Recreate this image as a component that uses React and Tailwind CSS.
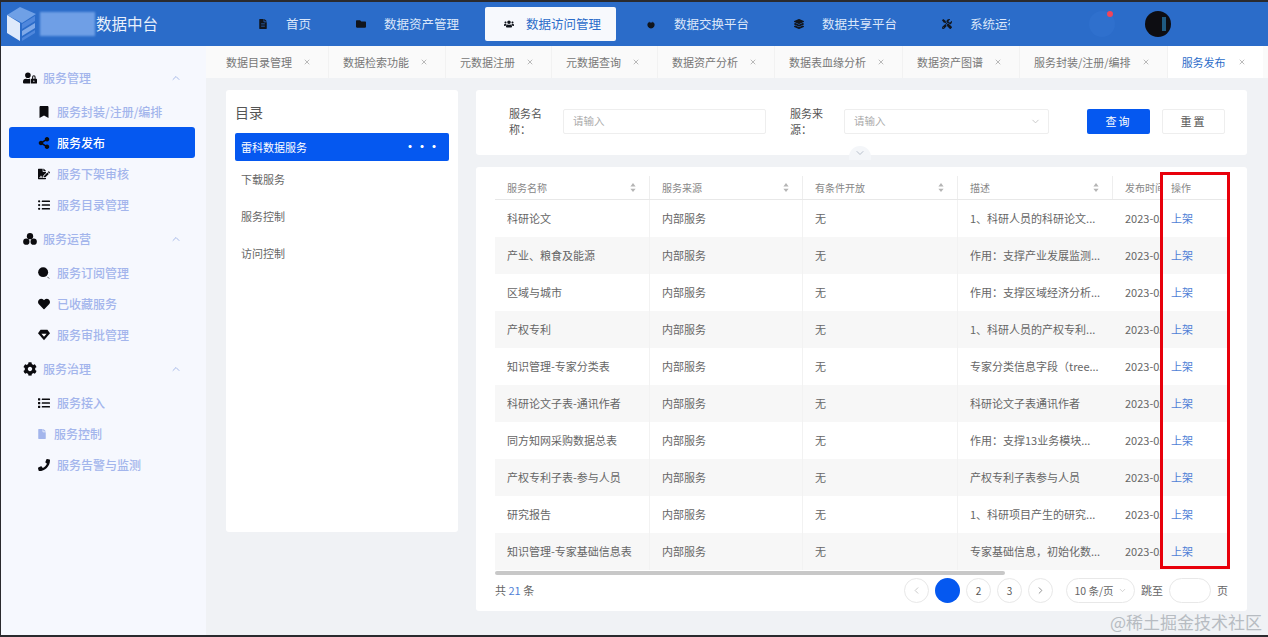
import {
  FaFileAlt, FaFolder, FaUsers, FaLayerGroup, FaTools, FaUserLock, FaBookmark, FaShareAlt,
  FaFileSignature, FaListUl, FaHeart, FaCog, FaList, FaFile, FaPhone, FaChevronUp,
} from 'react-icons/fa';
import { ChevronDown, ChevronLeft, ChevronRight, ChevronUp, X } from 'lucide-react';

const DropIcon = ({ className }) => (
  <svg viewBox="0 0 12 14" className={className} fill="currentColor">
    <path d="M6 0v5h2V3.500L10.500 6A5 5 0 1 1 1.500 6L4 3.500V5h2z" />
  </svg>
);

const CirclesIcon = ({ className }) => (
  <svg viewBox="0 0 16 14" className={className} fill="currentColor">
    <circle cx="8" cy="3.800" r="3.600" />
    <circle cx="3.800" cy="10" r="3.600" />
    <circle cx="12.200" cy="10" r="3.600" />
  </svg>
);

const OrderIcon = ({ className }) => (
  <svg viewBox="0 0 14 14" className={className} fill="currentColor">
    <circle cx="6" cy="6" r="5.800" />
    <path d="M11 11.500l2 2" stroke="currentColor" strokeWidth="0.800" />
  </svg>
);

const DiamondHeartIcon = ({ className }) => (
  <svg viewBox="0 0 14 12" className={className}>
    <path d="M3 0h8l3 4-7 8-7-8z" fill="currentColor" />
    <path d="M4 4.500h6L7 8z" fill="#fff" />
  </svg>
);

const Logo = () => (
  <svg viewBox="0 0 32 38" className="w-[32px] h-[38px]">
    <path d="M1 10 14 2l16 7-14 9z" fill="#6fa0e6" />
    <path d="M1 10l13 8v18L1 28z" fill="#dfeafb" />
    <path d="M16 19l13-8v5l-13 8z" fill="#4f87dc" />
    <path d="M16 26l13-8v5l-13 8z" fill="#7fa9e8" />
    <path d="M16 33l13-8v3l-13 8z" fill="#4f87dc" />
  </svg>
);

const navItems = [
  { label: '首页', icon: FaFileAlt },
  { label: '数据资产管理', icon: FaFolder },
  { label: '数据访问管理', icon: FaUsers, active: true },
  { label: '数据交换平台', icon: DropIcon },
  { label: '数据共享平台', icon: FaLayerGroup },
  { label: '系统运行管理', icon: FaTools },
];

const tabs = [
  '数据目录管理', '数据检索功能', '元数据注册', '元数据查询', '数据资产分析',
  '数据表血缘分析', '数据资产图谱', '服务封装/注册/编排',
];

const menu = [
  {
    title: '服务管理',
    icon: FaUserLock,
    items: [
      { label: '服务封装/注册/编排', icon: FaBookmark },
      { label: '服务发布', icon: FaShareAlt, active: true },
      { label: '服务下架审核', icon: FaFileSignature },
      { label: '服务目录管理', icon: FaListUl },
    ],
  },
  {
    title: '服务运营',
    icon: CirclesIcon,
    items: [
      { label: '服务订阅管理', icon: OrderIcon },
      { label: '已收藏服务', icon: FaHeart },
      { label: '服务审批管理', icon: DiamondHeartIcon },
    ],
  },
  {
    title: '服务治理',
    icon: FaCog,
    items: [
      { label: '服务接入', icon: FaList },
      { label: '服务控制', icon: FaFile, tinted: true },
      { label: '服务告警与监测', icon: FaPhone },
    ],
  },
];

const rows = [
  ['科研论文', '1、科研人员的科研论文...'],
  ['产业、粮食及能源', '作用：支撑产业发展监测...'],
  ['区域与城市', '作用：支撑区域经济分析...'],
  ['产权专利', '1、科研人员的产权专利...'],
  ['知识管理-专家分类表', '专家分类信息字段（tree...'],
  ['科研论文子表-通讯作者', '科研论文子表通讯作者'],
  ['同方知网采购数据总表', '作用：支撑13业务模块...'],
  ['产权专利子表-参与人员', '产权专利子表参与人员'],
  ['研究报告', '1、科研项目产生的研究...'],
  ['知识管理-专家基础信息表', '专家基础信息，初始化数...'],
];

const SortIcon = () => (
  <svg viewBox="0 0 8 12" className="w-[6px] h-[9px] text-[#b5b5b5]" fill="currentColor">
    <path d="M4 0l3.500 4.500h-7zM4 12L.5 7.500h7z" />
  </svg>
);

const HeadCell = ({ label, className, sort = true }) => (
  <div className={`flex items-center justify-between pl-3 pr-[13px] border-r border-[#eeeeee] ${className}`}>
    <span>{label}</span>
    {sort && <SortIcon />}
  </div>
);

const PageButton = ({ children, active }) => (
  <div
    className={`w-[25px] h-[25px] rounded-full flex items-center justify-center text-[10px] ${
      active ? 'bg-[#0558f0] text-white' : 'border border-[#e8e8e8] text-[#555555]'
    }`}
  >
    {children}
  </div>
);

export default function App() {
  return (
    <div className="relative h-[637px] w-[1268px] overflow-hidden flex flex-col border-t-2 border-b-2 border-l border-[#2a2a2e] bg-[#f0f2f5] text-[11px] text-[#666666] font-['Noto_Sans_CJK_SC','Liberation_Sans',sans-serif]">
      {/* top bar */}
      <header className="h-[44px] shrink-0 flex items-center bg-[#2b6cc9]">
        <div className="w-[238px] shrink-0 flex items-center pl-[5px]">
          <Logo />
          <div className="ml-[2px] w-[55px] h-[24px] bg-[#6f9fe6] blur-[1px]" />
          <span className="ml-[1px] text-[15.5px] text-[#e8f0fb]">数据中台</span>
        </div>
        <nav className="w-[771px] shrink-0 flex items-center gap-[11px] overflow-hidden">
          {navItems.map((item) => (
            <div
              key={item.label}
              className={`h-[34px] shrink-0 flex items-center pl-[19px] pr-[15px] rounded-[2px] whitespace-nowrap text-[12.500px] ${
                item.active ? 'bg-[#f7f9fd] text-[#2b6cc9] gap-[12px]' : 'text-[#dbe7fa] gap-[18px]'
              }`}
            >
              <item.icon className="w-[10px] h-[10px] text-[#11151c]" />
              {item.label}
            </div>
          ))}
        </nav>
        <div className="relative ml-[79px] w-[26px] h-[26px] rounded-full bg-[#2f70cd]">
          <span className="absolute right-[2px] top-[0px] w-[6px] h-[6px] rounded-full bg-[#f0455a]" />
        </div>
        <div className="ml-[30px] w-[26px] h-[26px] rounded-full bg-[#0d0d12] overflow-hidden flex items-center justify-end">
          <span className="w-[4px] h-[14px] mr-[5px] bg-[#1f5a80]" />
        </div>
      </header>

      <div className="flex flex-1 min-h-0">
        {/* side menu */}
        <aside className="w-[205px] shrink-0 bg-[#f6f8fe] pt-[15px] text-[12px] text-[#a3b5ec]">
          {menu.map((group) => (
            <div key={group.title} className="mb-[2px]">
              <div className="h-[34px] mb-[1px] flex items-center pl-[22px] pr-[24px]">
                <group.icon className="w-[14px] h-[14px] text-[#0b0b0f]" />
                <span className="ml-[6px] font-medium flex-1">{group.title}</span>
                <ChevronUp className="w-[12px] h-[12px] text-[#a9bbe9]" />
              </div>
              {group.items.map((item) => (
                <div
                  key={item.label}
                  className={`h-[31px] ml-[8px] mr-[11px] pl-[29px] flex items-center font-medium rounded-[3px] ${
                    item.active ? 'bg-[#0558f0] text-white font-bold' : ''
                  } ${item.tinted ? 'gap-[8px]' : 'gap-[7px]'}`}
                >
                  <item.icon className={item.tinted ? 'w-[8px] h-[10px] text-[#a3b5ec]' : 'w-[12px] h-[12px] text-[#0b0b0f]'} />
                  {item.label}
                </div>
              ))}
            </div>
          ))}
        </aside>

        <main className="flex-1 min-w-0 flex flex-col">
          {/* open tabs */}
          <div className="h-[32px] shrink-0 flex items-center bg-[#fafafa] pl-[6px] overflow-hidden whitespace-nowrap">
            {tabs.map((tab) => (
              <div key={tab} className="h-full shrink-0 flex items-center pl-[14px] pr-[17px] text-[#777777] border-r border-[#f2f2f2] last:border-r-0">
                <span>{tab}</span>
                <X className="ml-[11px] w-[8px] h-[8px] text-[#999999]" />
              </div>
            ))}
            <div className="h-full shrink-0 flex items-center pl-[14px] pr-[17px] bg-white text-[#2b6cc9]">
              <span>服务发布</span>
              <X className="ml-[12px] w-[8px] h-[8px] text-[#999999]" />
            </div>
            <span className="ml-[14px] text-[#888888]">···</span>
          </div>

          <div className="flex pt-[12px] pl-[20px] gap-[18px]">
            {/* catalog */}
            <section className="w-[232px] h-[442px] shrink-0 bg-white rounded-[3px] px-[9px] pt-[12px]">
              <h2 className="text-[14px] leading-[20px] text-[#555555]">目录</h2>
              <div className="mt-[11px] h-[28px] flex items-center justify-between pl-[6px] pr-[9px] rounded-[2px] bg-[#0558f0] text-white">
                <span>雷科数据服务</span>
                <span className="text-[12px] font-bold leading-none">···</span>
              </div>
              {['下载服务', '服务控制', '访问控制'].map((name) => (
                <div key={name} className="h-[37px] first-of-type:mt-[5px] flex items-center pl-[6px]">{name}</div>
              ))}
            </section>

            <div className="w-[771px] shrink-0 flex flex-col gap-[12px]">
              {/* filter */}
              <section className="relative h-[65px] bg-white rounded-[3px] flex items-center pl-[33px] pb-[3px] text-[#555555]">
                <span className="w-[54px] shrink-0">服务名称：</span>
                <div className="w-[203px] h-[25px] border border-[#eeeeee] rounded-[2px] flex items-center pl-[9px] text-[10.500px] text-[#aaaaaa]">请输入</div>
                <span className="ml-[24px] w-[54px] shrink-0">服务来源：</span>
                <div className="w-[205px] h-[25px] border border-[#eeeeee] rounded-[2px] flex items-center justify-between pl-[9px] pr-[7px] text-[10.500px] text-[#aaaaaa]">
                  请输入
                  <ChevronDown className="w-[11px] h-[11px] text-[#c5c5c5]" />
                </div>
                <button className="ml-[38px] w-[63px] h-[25px] rounded-[2px] bg-[#0558f0] text-white tracking-[2px]">查询</button>
                <button className="ml-[12px] w-[63px] h-[25px] rounded-[2px] border border-[#eeeeee] text-[#555555] tracking-[2px]">重置</button>
                <div className="absolute left-[373px] bottom-[-5px] w-[22px] h-[14px] rounded-t-full bg-[#f4f6f9] flex items-center justify-center">
                  <ChevronDown className="w-[12px] h-[12px] text-[#b8c0cc]" />
                </div>
              </section>

              {/* table */}
              <section className="h-[444px] bg-white rounded-[3px] pt-[9px] pl-[19px] pr-[17px]">
                <div className="h-[24px] flex items-stretch border-b border-[#e8e8e8] text-[10px] text-[#888888]">
                  <HeadCell label="服务名称" className="w-[155px]" />
                  <HeadCell label="服务来源" className="w-[153px]" />
                  <HeadCell label="有条件开放" className="w-[155px]" />
                  <HeadCell label="描述" className="w-[155px]" />
                  <div className="w-[47px] pl-3 flex items-center overflow-hidden whitespace-nowrap">发布时间</div>
                  <div className="w-[70px] pl-[11px] flex items-center">操作</div>
                </div>
                {rows.map(([name, desc], i) => (
                  <div key={name} className={`h-[37px] flex items-stretch whitespace-nowrap ${i % 2 === 1 ? 'bg-[#f7f7f7]' : 'bg-white'}`}>
                    <div className="w-[155px] pl-3 flex items-center border-r border-[#f2f2f2]">{name}</div>
                    <div className="w-[153px] pl-3 flex items-center border-r border-[#f2f2f2]">内部服务</div>
                    <div className="w-[155px] pl-3 flex items-center border-r border-[#f2f2f2]">无</div>
                    <div className="w-[155px] pl-3 flex items-center">{desc}</div>
                    <div className="w-[47px] pl-3 flex items-center overflow-hidden">2023-05-12</div>
                    <div className="w-[70px] pl-[11px] flex items-center text-[#4f7fd6]">上架</div>
                  </div>
                ))}
                <div className="mt-[1px] h-[4px] w-[510px] rounded-full bg-[#c8c8c8]" />
                <div className="mt-[3px] h-[25px] flex items-center text-[#666666]">
                  <span className="pl-[-1px]">共 <span className="text-[#4f7fd6]">21</span> 条</span>
                  <div className="ml-auto flex items-center gap-[6px]">
                    <PageButton><ChevronLeft className="w-[11px] h-[11px] text-[#c5c5c5]" /></PageButton>
                    <PageButton active> </PageButton>
                    <PageButton>2</PageButton>
                    <PageButton>3</PageButton>
                    <PageButton><ChevronRight className="w-[11px] h-[11px] text-[#888888]" /></PageButton>
                  </div>
                  <div className="ml-[13px] w-[69px] h-[25px] rounded-full border border-[#e8e8e8] flex items-center justify-center gap-[4px] text-[10.500px]">
                    10 条/页
                    <ChevronDown className="w-[9px] h-[9px] text-[#c5c5c5]" />
                  </div>
                  <span className="ml-[6px]">跳至</span>
                  <div className="ml-[6px] w-[42px] h-[25px] rounded-full border border-[#e8e8e8]" />
                  <span className="ml-[6px] mr-[2px]">页</span>
                </div>
              </section>
            </div>
          </div>
        </main>
      </div>

      {/* annotation frame and watermark sit over the page */}
      <div className="absolute left-[1159px] top-[170px] w-[70px] h-[397px] border-[3px] border-[#e8000b]" />
      <div className="absolute right-[6px] bottom-[1px] text-[17px] text-[#b7bcc2] whitespace-nowrap">@稀土掘金技术社区</div>
    </div>
  );
}
